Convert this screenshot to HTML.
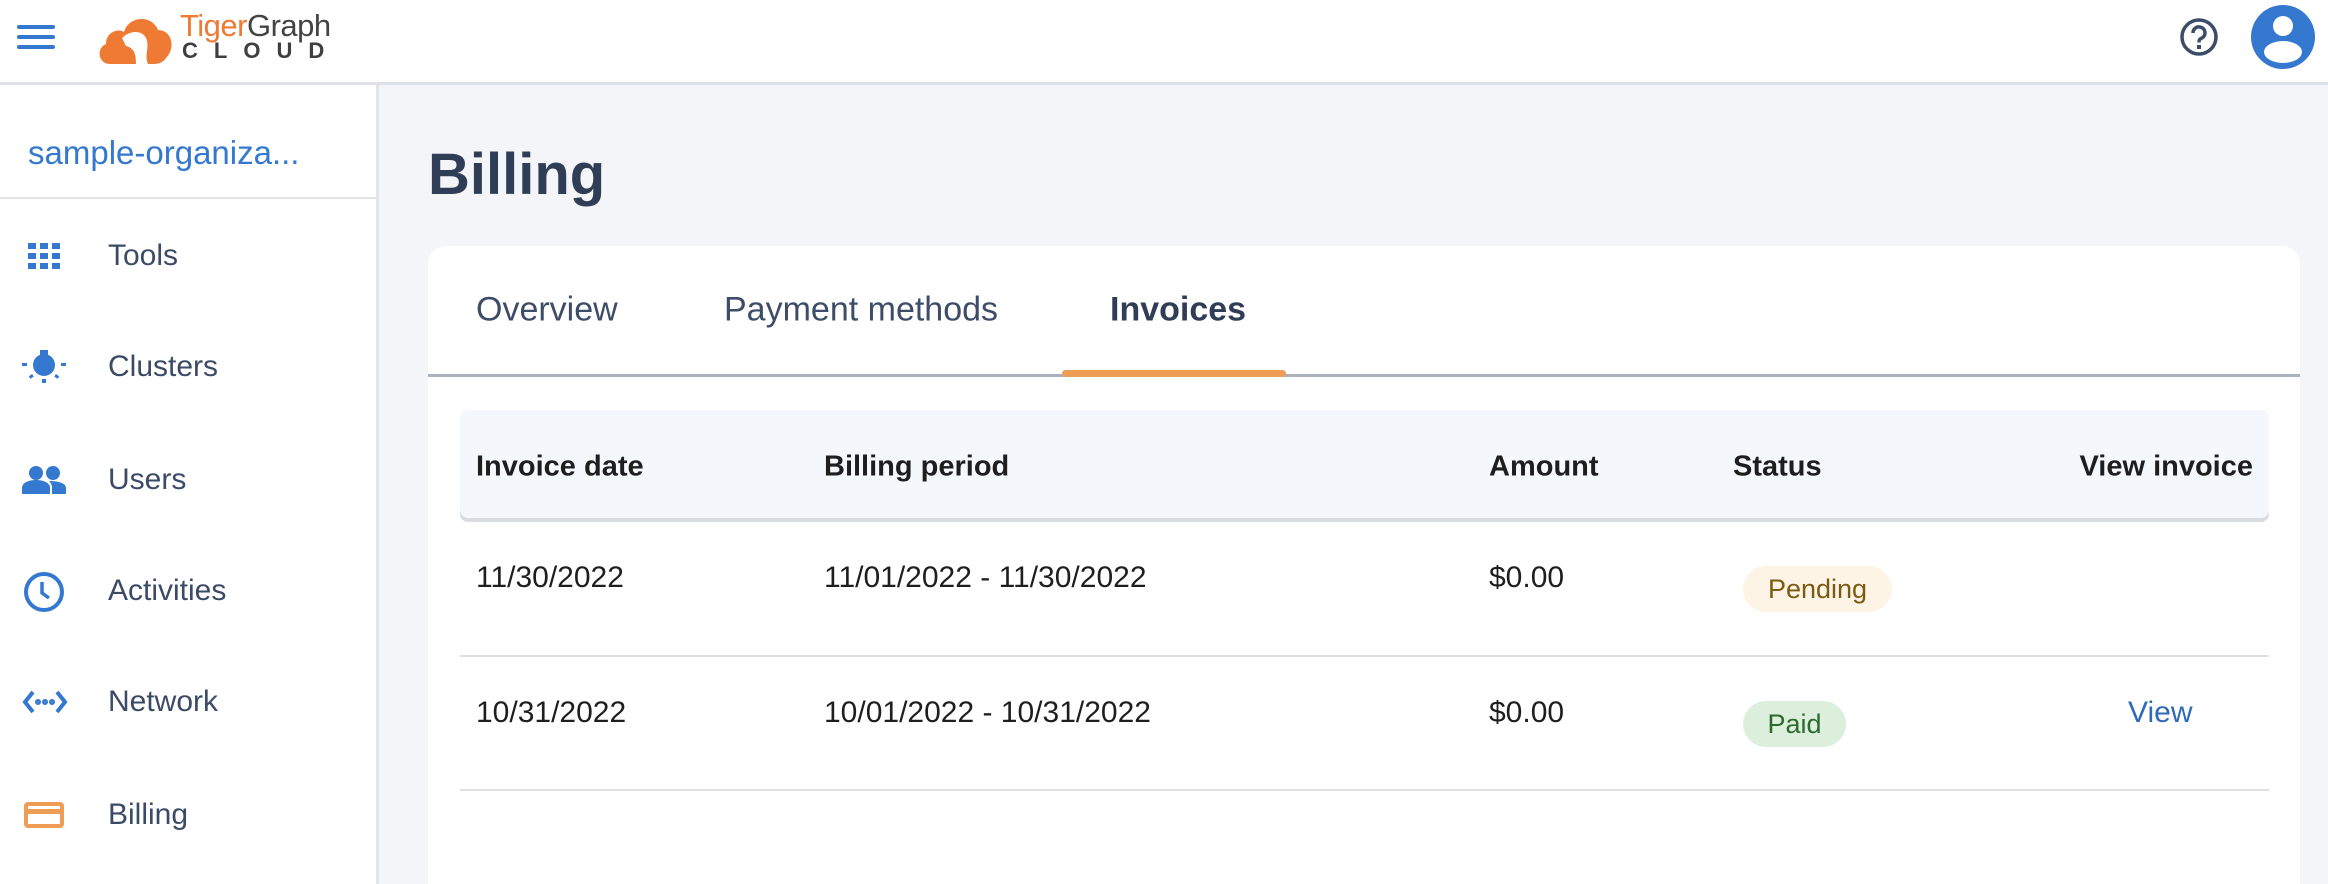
<!DOCTYPE html>
<html style="overflow:hidden;width:2328px;height:884px"><head><meta charset="utf-8"><style>
*{margin:0;padding:0;box-sizing:border-box}
body{width:2328px;height:884px;overflow:hidden;background:#f4f5f8;font-family:"Liberation Sans",sans-serif;position:relative}
.abs{position:absolute}
.hdr{left:0;top:0;width:2328px;height:85px;background:#fff;border-bottom:3px solid #dde1e6}
.side{left:0;top:85px;width:379px;height:799px;background:#fff;border-right:3px solid #e2e4e8}
.nav{position:absolute;left:108px;font-size:30px;color:#3b4b66;transform:translateY(-50%)}
.ic{position:absolute;left:22px}
.card{left:428px;top:246px;width:1872px;height:638px;background:#fff;border-radius:18px 18px 0 0}
.tab{position:absolute;top:310px;transform:translateY(-50%);font-size:34px;color:#3d4d68}
.th{position:absolute;top:467px;transform:translateY(-50%);font-size:29px;font-weight:bold;color:#1e1e1e}
.td{position:absolute;transform:translateY(-50%);font-size:30px;color:#1e1e1e}
</style></head><body>
<div class="abs hdr"></div>
<svg class="abs" style="left:17px;top:24px" width="38" height="26"><rect y="1" width="38" height="4" rx="2" fill="#3478d0"/><rect y="11" width="38" height="4" rx="2" fill="#3478d0"/><rect y="21" width="38" height="4" rx="2" fill="#3478d0"/></svg>
<svg class="abs" style="left:96px;top:8px" width="80" height="58" viewBox="0 0 80 58"><path d="M14 56 C2 56 0 40 10 36 C10 24 22 20 28 24 C32 8 56 6 62 22 C76 22 80 40 70 50 C66 56 60 56 56 56 Z" fill="#ef7a33"/><path d="M26 30 C34 22 46 22 50 30 C54 38 48 48 52 56 L40 56 C40 46 38 40 30 38 Z" fill="#fff"/></svg>
<div class="abs" style="left:180px;top:10px;font-size:31px;line-height:32px;letter-spacing:-0.5px"><span style="color:#ef7a33">Tiger</span><span style="color:#444">Graph</span></div>
<div class="abs" style="left:182px;top:40px;font-size:22px;line-height:22px;letter-spacing:16px;color:#3f3f3f;font-weight:bold">CLOUD</div>
<svg class="abs" style="left:2178px;top:16px" width="42" height="42"><circle cx="21" cy="21" r="17" fill="none" stroke="#3d4d68" stroke-width="3.5"/><path d="M15 17 a6 6 0 1 1 8 5.5 c-2 1 -2 2 -2 4" fill="none" stroke="#3d4d68" stroke-width="3.5"/><rect x="19" y="29" width="4" height="4" fill="#3d4d68"/></svg>
<svg class="abs" style="left:2251px;top:5px" width="64" height="64"><circle cx="32" cy="32" r="32" fill="#3478d0"/><circle cx="32" cy="21" r="10" fill="#fff"/><ellipse cx="32" cy="47" rx="19" ry="11" fill="#fff"/></svg>
<div class="abs side"></div>
<div class="abs" style="left:28px;top:134px;font-size:33px;color:#3478d0">sample-organiza...</div>
<div class="abs" style="left:0;top:197px;width:379px;height:2px;background:#e2e4e8"></div>
<svg class="ic" style="top:243px;left:28px" width="33" height="26" fill="#3478d0"><rect x="0" y="0" width="8" height="6"/><rect x="12" y="0" width="8" height="6"/><rect x="24" y="0" width="8" height="6"/><rect x="0" y="10" width="8" height="6"/><rect x="12" y="10" width="8" height="6"/><rect x="24" y="10" width="8" height="6"/><rect x="0" y="20" width="8" height="6"/><rect x="12" y="20" width="8" height="6"/><rect x="24" y="20" width="8" height="6"/></svg>
<div class="nav" style="top:256px">Tools</div>
<svg class="ic" style="top:350px" width="46" height="34" fill="#3478d0"><rect x="18" y="0" width="8" height="8"/><circle cx="22" cy="15" r="11"/><rect x="0" y="13" width="5" height="3"/><rect x="39" y="13" width="5" height="3"/><rect x="20" y="29" width="4" height="4"/><rect x="7" y="25" width="4" height="3" transform="rotate(-35 9 26)"/><rect x="33" y="25" width="4" height="3" transform="rotate(35 35 26)"/></svg>
<div class="nav" style="top:367px">Clusters</div>
<svg class="ic" style="top:466px" width="46" height="28" fill="#3478d0"><circle cx="14" cy="7" r="7"/><circle cx="31" cy="7" r="7"/><path d="M0 28 v-6 c0-6 8-8 14-8 c6 0 14 2 14 8 v6 Z"/><path d="M30 28 v-6 c0-3-1-5-3-7 c9 0 17 2 17 7 v6 Z"/></svg>
<div class="nav" style="top:480px">Users</div>
<svg class="ic" style="top:570px" width="44" height="44"><circle cx="22" cy="22" r="18" fill="none" stroke="#3478d0" stroke-width="4"/><path d="M20 12 v11 l7 5" fill="none" stroke="#3478d0" stroke-width="3.5"/></svg>
<div class="nav" style="top:591px">Activities</div>
<svg class="ic" style="top:689px" width="46" height="26" fill="none" stroke="#3478d0" stroke-width="4"><path d="M11 3 L3 13 L11 23"/><path d="M35 3 L43 13 L35 23"/><circle cx="16" cy="13" r="1" fill="#3478d0"/><circle cx="23" cy="13" r="1" fill="#3478d0"/><circle cx="30" cy="13" r="1" fill="#3478d0"/></svg>
<div class="nav" style="top:702px">Network</div>
<svg class="ic" style="top:802px;left:24px" width="40" height="26"><rect x="2" y="2" width="36" height="22" rx="2" fill="none" stroke="#ef9d55" stroke-width="4"/><rect x="2" y="7" width="36" height="5" fill="#ef9d55"/></svg>
<div class="nav" style="top:815px">Billing</div>
<div class="abs" style="left:428px;top:140px;font-size:58px;font-weight:bold;color:#2f3e56;line-height:70px">Billing</div>
<div class="abs card"></div>
<div class="tab" style="left:476px">Overview</div>
<div class="tab" style="left:724px">Payment methods</div>
<div class="tab" style="left:1110px;color:#2f3e56;font-weight:bold">Invoices</div>
<div class="abs" style="left:428px;top:374px;width:1872px;height:3px;background:#a9b2bd"></div>
<div class="abs" style="left:1062px;top:370px;width:224px;height:7px;background:#ef9d55;border-radius:4px"></div>
<div class="abs" style="left:460px;top:410px;width:1809px;height:108px;background:#f4f7fc;border-radius:8px;box-shadow:0 4px 0 #d8dce2"></div>
<div class="th" style="left:476px">Invoice date</div>
<div class="th" style="left:824px">Billing period</div>
<div class="th" style="left:1489px">Amount</div>
<div class="th" style="left:1733px">Status</div>
<div class="th" style="right:75px">View invoice</div>
<div class="td" style="left:476px;top:578px">11/30/2022</div>
<div class="td" style="left:824px;top:578px">11/01/2022 - 11/30/2022</div>
<div class="td" style="left:1489px;top:578px">$0.00</div>
<div class="abs" style="left:1743px;top:566px;width:149px;height:46px;border-radius:23px;background:#fdf4e6;color:#7c5a12;font-size:27px;line-height:46px;text-align:center">Pending</div>
<div class="abs" style="left:460px;top:655px;width:1809px;height:2px;background:#e0e0e0"></div>
<div class="td" style="left:476px;top:713px">10/31/2022</div>
<div class="td" style="left:824px;top:713px">10/01/2022 - 10/31/2022</div>
<div class="td" style="left:1489px;top:713px">$0.00</div>
<div class="abs" style="left:1743px;top:701px;width:103px;height:46px;border-radius:23px;background:#dcefdc;color:#2d6a2d;font-size:27px;line-height:46px;text-align:center">Paid</div>
<div class="td" style="left:2128px;top:713px;color:#2f6ab8">View</div>
<div class="abs" style="left:460px;top:789px;width:1809px;height:2px;background:#e0e0e0"></div>
</body></html>
